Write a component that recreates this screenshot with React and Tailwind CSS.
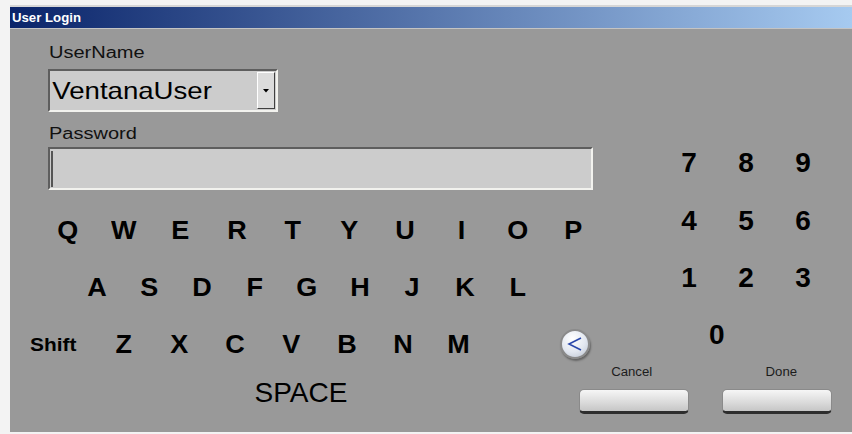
import React from 'react';

const ROW_Q = ['Q', 'W', 'E', 'R', 'T', 'Y', 'U', 'I', 'O', 'P'];
const ROW_A = ['A', 'S', 'D', 'F', 'G', 'H', 'J', 'K', 'L'];
const ROW_Z = ['Z', 'X', 'C', 'V', 'B', 'N', 'M'];
const PAD = [
  ['7', '8', '9'],
  ['4', '5', '6'],
  ['1', '2', '3'],
];

// single on-screen key, width comes in as a full class
const Key = ({ label, w }) => (
  <div className={`${w} shrink-0 flex items-center justify-center text-[25px] leading-none font-bold text-black`}>
    <span className="inline-block scale-x-[1.08]">{label}</span>
  </div>
);

const Digit = ({ n }) => (
  <div className="w-[57px] shrink-0 flex items-center justify-center text-[28px] leading-none font-bold text-black">
    {n}
  </div>
);

const sunken = 'border-2 border-t-[#5e5e5e] border-l-[#5e5e5e] border-b-[#f2f2ee] border-r-[#f2f2ee] bg-[#cccccc]';

const App = () => {
  return (
    <div className="w-[852px] h-[434px] overflow-hidden bg-[#f3f3f3] pt-[5px] pl-[10px] pb-[2px] flex flex-col font-['Liberation_Sans',Arial,sans-serif] select-none">
      {/* title bar */}
      <div className="h-[24px] shrink-0 border-t-2 border-t-[#d6d6d6] border-b border-b-[#c4c4c4] bg-[linear-gradient(90deg,#0a246a,#a6caf0)] flex items-center pl-[2px] pt-[1px]">
        <span className="inline-block origin-left scale-x-[1.1] text-white font-bold text-[12px] leading-none">User Login</span>
      </div>

      <div className="flex-1 bg-[#999999] flex">
        {/* left: fields + keyboard */}
        <div className="w-[569px] shrink-0 flex flex-col">
          <div className="ml-[39px] mt-[13.5px] h-[20px] text-[16px] leading-[20px] text-[#111]">
            <span className="inline-block origin-left scale-x-[1.25]">UserName</span>
          </div>
          <div className={`ml-[38px] mt-[6.5px] w-[230px] h-[43px] flex items-center justify-between ${sunken}`}>
            <span className="inline-block origin-left scale-x-[1.15] pl-[2px] text-[24px] leading-none text-black">VentanaUser</span>
            <div className="w-[18px] h-[37px] mr-[1px] bg-[#dcdcdc] border border-t-white border-l-white border-b-[#404040] border-r-[#404040] flex items-center justify-center">
              <svg width="6" height="4" viewBox="0 0 6 4">
                <path d="M0 0h6L3 3.5z" fill="#000" />
              </svg>
            </div>
          </div>

          <div className="ml-[39px] mt-[11.5px] h-[20px] text-[16px] leading-[20px] text-[#111]">
            <span className="inline-block origin-left scale-x-[1.25]">Password</span>
          </div>
          <div className={`ml-[38px] mt-[3.5px] w-[545px] h-[43px] flex items-center pl-[1px] ${sunken}`}>
            <div className="w-[2px] h-[36px] bg-[#555555]" />
          </div>

          <div className="flex h-[57px] mt-[11.5px] ml-[30px]">
            {ROW_Q.map((k) => (
              <Key key={k} label={k} w="w-[56.2px]" />
            ))}
          </div>
          <div className="flex h-[57px] ml-[60.4px]">
            {ROW_A.map((k) => (
              <Key key={k} label={k} w="w-[52.6px]" />
            ))}
          </div>
          <div className="flex h-[57px] ml-[20px] items-center">
            <div className="w-[66px] shrink-0 text-[19px] leading-none font-bold text-black">
              <span className="inline-block origin-left scale-x-[1.1]">Shift</span>
            </div>
            {ROW_Z.map((k) => (
              <Key key={k} label={k} w="w-[55.8px] h-full" />
            ))}
            <div className="ml-[73.4px] w-[30px] h-[30px] shrink-0 rounded-full border-2 border-[#8a8a8a] bg-[radial-gradient(circle_at_40%_30%,#ffffff,#e2e7f0_55%,#b9c1ce)] shadow-[1px_2px_2px_rgba(0,0,0,0.35)] flex items-center justify-center">
              <svg width="16" height="16" viewBox="0 0 16 16">
                <polyline points="14,2 2,8 14,14" fill="none" stroke="#2a48aa" strokeWidth="1.6" />
              </svg>
            </div>
          </div>
          <div className="flex h-[40px] items-center ml-[231px]">
            <div className="w-[120px] text-center text-[28px] leading-none text-black">SPACE</div>
          </div>
        </div>

        {/* right: number pad + actions */}
        <div className="flex-1 flex flex-col pt-[105.6px]">
          {PAD.map((row) => (
            <div key={row[0]} className="flex h-[57.3px] ml-[81.5px]">
              {row.map((n) => (
                <Digit key={n} n={n} />
              ))}
            </div>
          ))}
          <div className="flex h-[57.3px] ml-[109.2px]">
            <Digit n="0" />
          </div>

          <div className="flex mt-[1.6px] h-[14px] text-[12px] leading-[14px] text-[#1c1c1c]">
            <div className="w-[106px] text-center">
              <span className="inline-block scale-x-[1.1]">Cancel</span>
            </div>
            <div className="ml-[50px] w-[92px] text-center">
              <span className="inline-block scale-x-[1.1]">Done</span>
            </div>
          </div>

          <div className="flex gap-[33px] mt-[9.5px]">
            <button className="w-[110px] h-[25px] rounded-[5px] border border-[#8a8a8a] border-b-[3px] border-b-[#2e2e2e] bg-[linear-gradient(#f6f6f6,#dadada_60%,#c6c6c6)]" />
            <button className="w-[110px] h-[25px] rounded-[5px] border border-[#8a8a8a] border-b-[3px] border-b-[#2e2e2e] bg-[linear-gradient(#f6f6f6,#dadada_60%,#c6c6c6)]" />
          </div>
        </div>
      </div>
    </div>
  );
};

export default App;
